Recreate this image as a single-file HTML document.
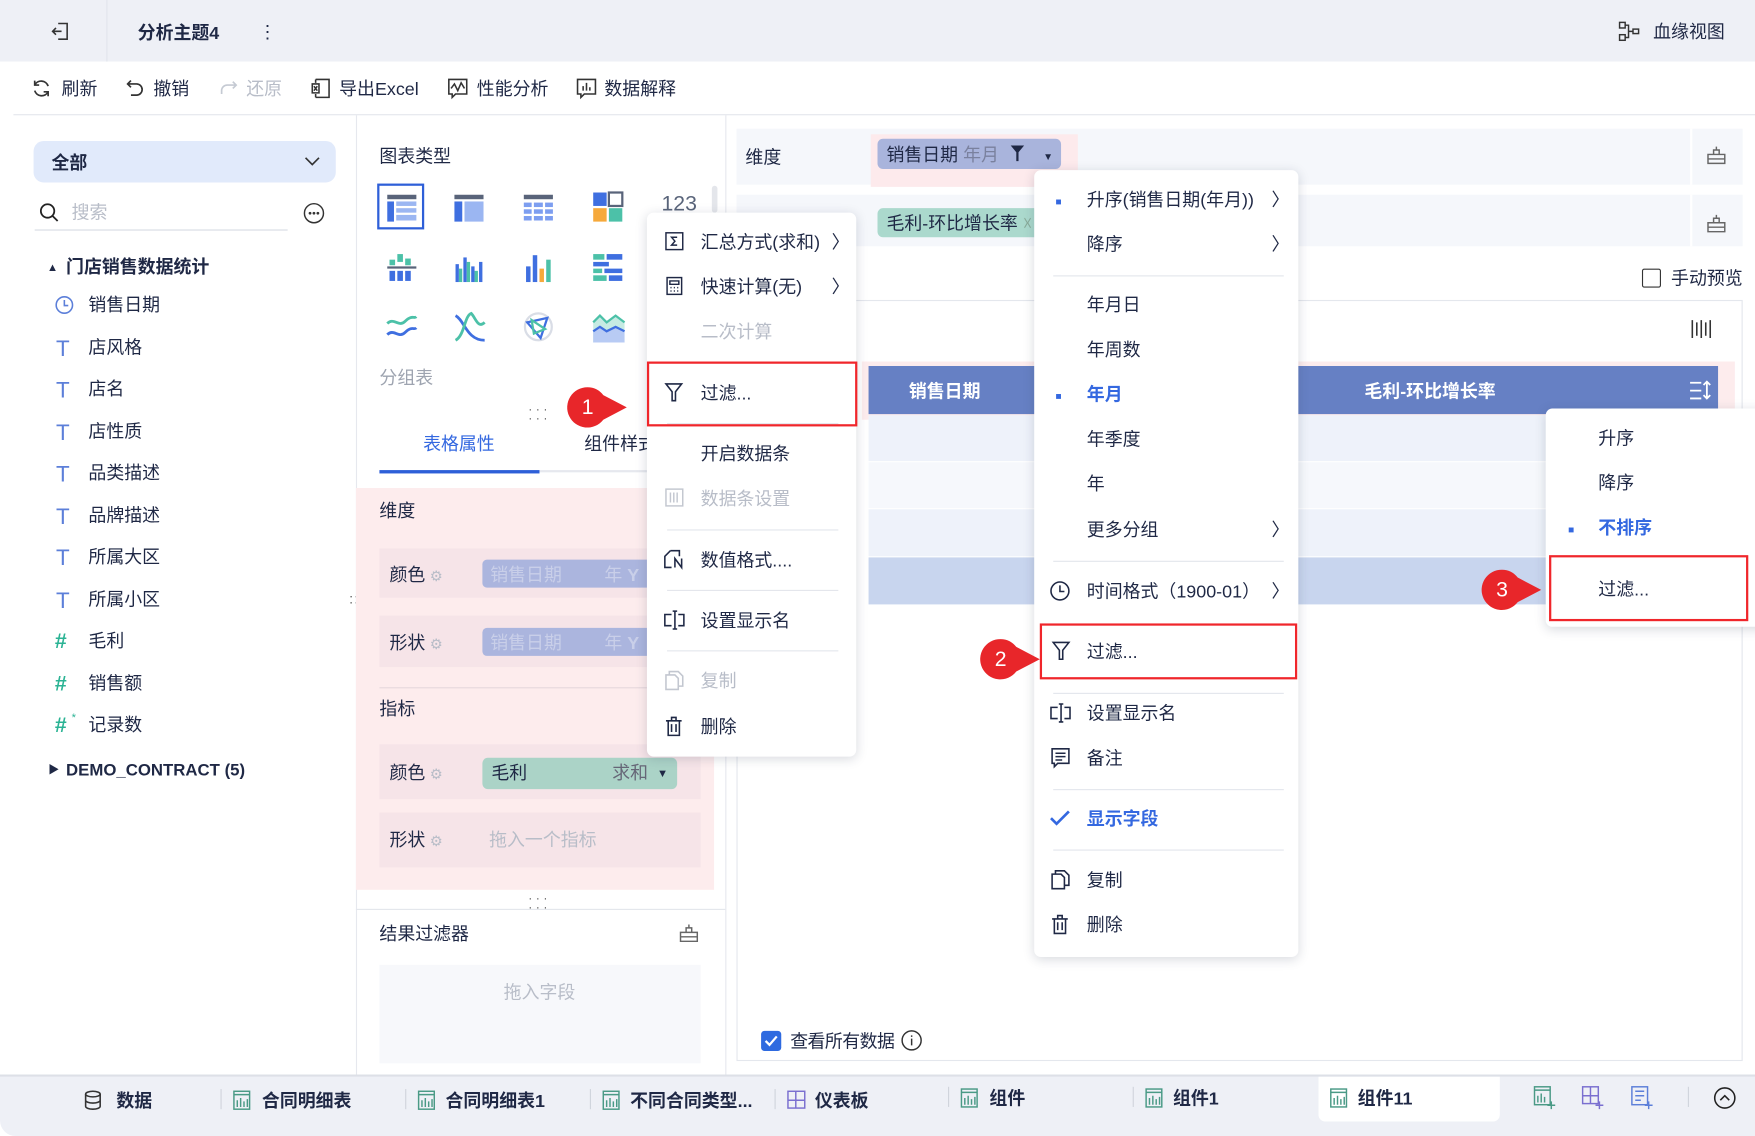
<!DOCTYPE html>
<html><head><meta charset="utf-8">
<style>
*{margin:0;padding:0;box-sizing:border-box}
html,body{width:1755px;height:1136px;overflow:hidden;background:#fff}
#w{position:absolute;left:0;top:0;width:1568px;height:1015px;transform:scale(1.11926);transform-origin:0 0;font-family:"Liberation Sans","Noto Sans CJK SC",sans-serif;color:#1f2845;font-size:16px}
.a{position:absolute}
.t{position:absolute;white-space:nowrap;transform:translateY(calc(-50% + 2px));line-height:20px}
.g{color:#b8bdc8}
.b{font-weight:bold}
.bl{color:#3468e0}
.menu{position:absolute;background:#fff;border-radius:6px;box-shadow:0 2px 10px rgba(40,50,80,.18)}
.sep{position:absolute;height:1px;background:#e3e6ec}
.red{position:absolute;border:2.5px solid #f0262b}
svg{position:absolute;overflow:visible}
</style></head><body><div id="w">
<!-- top bar -->
<div class="a" style="left:0;top:0;width:1568px;height:55px;background:#eef0f6"></div>
<div class="a" style="left:95px;top:0;width:1px;height:55px;background:#e2e5ec"></div>
<svg style="left:45px;top:19px" width="18" height="18" viewBox="0 0 18 18" fill="none" stroke="#333" stroke-width="1.4"><path d="M7 2h8v14H7M10 9H2M5 6L2 9l3 3"/></svg>
<div class="t b" style="left:123px;top:29px">分析主题4</div>
<div class="t" style="left:231px;top:28px">⋮</div>
<svg style="left:1446px;top:19px" width="20" height="18" viewBox="0 0 20 18" fill="none" stroke="#333" stroke-width="1.3"><rect x="1" y="1" width="5" height="5"/><rect x="1" y="12" width="5" height="5"/><rect x="13" y="7" width="5" height="4"/><path d="M6 3.5h3v11H6M9 9h4"/></svg>
<div class="t" style="left:1477px;top:28px">血缘视图</div>
<!-- toolbar -->
<div class="a" style="left:12px;top:102px;width:1556px;height:1px;background:#e3e6ec"></div>
<svg style="left:28px;top:70px" width="18" height="18" viewBox="0 0 18 18" fill="none" stroke="#333" stroke-width="1.5"><path d="M15 7A6.5 6.5 0 0 0 3 6M3 11a6.5 6.5 0 0 0 12 1M3 2v4h4M15 16v-4h-4"/></svg>
<div class="t" style="left:55px;top:79px">刷新</div>
<svg style="left:112px;top:70px" width="18" height="18" viewBox="0 0 18 18" fill="none" stroke="#333" stroke-width="1.5"><path d="M5 2L2 5l3 3M2 5h8a5 5 0 0 1 0 10H5"/></svg>
<div class="t" style="left:137px;top:79px">撤销</div>
<svg style="left:195px;top:70px" width="18" height="18" viewBox="0 0 18 18" fill="none" stroke="#c5cad3" stroke-width="1.5"><path d="M13 3l3 3-3 3M16 6H8a5 5 0 0 0-5 5v3"/></svg>
<div class="t g" style="left:220px;top:79px">还原</div>
<svg style="left:278px;top:70px" width="18" height="18" viewBox="0 0 18 18" fill="none" stroke="#333" stroke-width="1.4"><path d="M4 1h12v16H4M4 1v3M4 14v3M1 5h6v8H1zM2.5 7l3 4M5.5 7l-3 4"/></svg>
<div class="t" style="left:303px;top:79px">导出Excel</div>
<svg style="left:400px;top:70px" width="18" height="18" viewBox="0 0 18 18" fill="none" stroke="#333" stroke-width="1.4"><path d="M1 1h16v13H7l-3 3v-3H1zM3 9l3-4 3 6 3-7 3 5"/></svg>
<div class="t" style="left:426px;top:79px">性能分析</div>
<svg style="left:515px;top:70px" width="18" height="18" viewBox="0 0 18 18" fill="none" stroke="#333" stroke-width="1.4"><path d="M1 1h16v13H7l-3 3v-3H1zM6 11V7M9 11V4M12 11V8"/></svg>
<div class="t" style="left:540px;top:79px">数据解释</div>
<!-- left panel -->
<div class="a" style="left:30px;top:126px;width:270px;height:37px;background:#e1eafb;border-radius:9px"></div>
<div class="t b" style="left:46px;top:145px">全部</div>
<svg style="left:272px;top:140px" width="14" height="8" viewBox="0 0 14 8" fill="none" stroke="#333" stroke-width="1.5"><path d="M1 1l6 6 6-6"/></svg>
<svg style="left:35px;top:181px" width="18" height="18" viewBox="0 0 18 18" fill="none" stroke="#222" stroke-width="1.6"><circle cx="7.5" cy="7.5" r="6"/><path d="M12 12l4.5 4.5"/></svg>
<div class="t g" style="left:64px;top:189px">搜索</div>
<div class="a" style="left:31px;top:205px;width:226px;height:1px;background:#d7dbe3"></div>
<svg style="left:271px;top:181px" width="19" height="19" viewBox="0 0 19 19" fill="none" stroke="#333" stroke-width="1.3"><circle cx="9.5" cy="9.5" r="8.5"/><circle cx="6" cy="9.5" r=".6" fill="#333"/><circle cx="9.5" cy="9.5" r=".6" fill="#333"/><circle cx="13" cy="9.5" r=".6" fill="#333"/></svg>
<div class="t" style="left:42px;top:238px;font-size:10px">▲</div>
<div class="t b" style="left:59px;top:238px">门店销售数据统计</div>
<svg style="left:49px;top:264px" width="17" height="17" viewBox="0 0 17 17" fill="none" stroke="#5c7fd9" stroke-width="1.4"><circle cx="8.5" cy="8.5" r="7.3"/><path d="M8.5 4v5h3.5"/></svg>
<div class="t" style="left:79px;top:272px">销售日期</div>
<div style="color:#5c7fd9;font-size:20px">
<div class="t" style="left:50px;top:310px">T</div><div class="t" style="left:50px;top:347px">T</div><div class="t" style="left:50px;top:385px">T</div><div class="t" style="left:50px;top:422px">T</div><div class="t" style="left:50px;top:460px">T</div><div class="t" style="left:50px;top:497px">T</div><div class="t" style="left:50px;top:535px">T</div></div>
<div style="color:#2bb394;font-size:19px;font-weight:bold">
<div class="t" style="left:49px;top:572px">#</div><div class="t" style="left:49px;top:610px">#</div><div class="t" style="left:49px;top:647px">#</div></div>
<div class="t" style="left:64px;top:640px;font-size:10px;color:#2bb394">*</div>
<div class="t" style="left:79px;top:310px">店风格</div>
<div class="t" style="left:79px;top:347px">店名</div>
<div class="t" style="left:79px;top:385px">店性质</div>
<div class="t" style="left:79px;top:422px">品类描述</div>
<div class="t" style="left:79px;top:460px">品牌描述</div>
<div class="t" style="left:79px;top:497px">所属大区</div>
<div class="t" style="left:79px;top:535px">所属小区</div>
<div class="t" style="left:79px;top:572px">毛利</div>
<div class="t" style="left:79px;top:610px">销售额</div>
<div class="t" style="left:79px;top:647px">记录数</div>
<div class="t" style="left:43px;top:687px;font-size:10px">▶</div>
<div class="t b" style="left:59px;top:687px;font-size:15px">DEMO_CONTRACT (5)</div>
<div class="t" style="left:312px;top:533px;font-size:12px;color:#555;letter-spacing:-1px;line-height:6px">: :</div>
<!-- middle panel -->
<div class="a" style="left:318px;top:103px;width:1px;height:860px;background:#e6e8ee"></div>
<div class="a" style="left:648px;top:103px;width:1px;height:860px;background:#e6e8ee"></div>
<div class="t" style="left:339px;top:139px">图表类型</div>
<div class="a" style="left:337px;top:164px;width:42px;height:41px;border:2.5px solid #2e5fd8"></div>
<svg style="left:346px;top:174px" width="26" height="24" viewBox="0 0 26 24"><rect x="0" y="0" width="26" height="4" fill="#59647a"/><rect x="0" y="6" width="6" height="18" fill="#3f6fe0"/><rect x="8" y="6" width="18" height="4" fill="#9bb6f2"/><rect x="8" y="12" width="18" height="4" fill="#9bb6f2"/><rect x="8" y="18" width="18" height="5" fill="#9bb6f2"/></svg>
<svg style="left:406px;top:174px" width="26" height="24" viewBox="0 0 26 24"><rect width="26" height="4" fill="#59647a"/><rect x="0" y="6" width="7" height="18" fill="#3f6fe0"/><rect x="9" y="6" width="17" height="18" fill="#9bb6f2"/></svg>
<svg style="left:468px;top:174px" width="26" height="24" viewBox="0 0 26 24"><rect width="26" height="4" fill="#59647a"/><g fill="#7d9ef0"><rect y="7" width="7" height="4"/><rect x="9" y="7" width="8" height="4"/><rect x="19" y="7" width="7" height="4"/><rect y="13" width="7" height="4"/><rect x="9" y="13" width="8" height="4"/><rect x="19" y="13" width="7" height="4"/><rect y="19" width="7" height="4"/><rect x="9" y="19" width="8" height="4"/><rect x="19" y="19" width="7" height="4"/></g></svg>
<svg style="left:530px;top:172px" width="26" height="26" viewBox="0 0 26 26"><rect width="12" height="12" fill="#3f6fe0"/><rect x="14" y="0" width="12" height="12" fill="#fff" stroke="#59647a" stroke-width="2"/><rect y="14" width="12" height="12" fill="#f6a93b"/><rect x="14" y="14" width="12" height="12" fill="#4cc1a8"/></svg>
<div class="t" style="left:591px;top:181px;font-size:19px;color:#59647a">123</div>
<div class="a" style="left:636px;top:166px;width:5px;height:24px;background:#e4e6eb;border-radius:3px"></div>
<svg style="left:346px;top:227px" width="26" height="24" viewBox="0 0 26 24"><g fill="#4cc1a8"><rect x="9" y="0" width="5" height="7"/><rect x="2" y="5" width="5" height="5"/><rect x="16" y="4" width="5" height="6"/></g><rect x="0" y="11" width="26" height="2" fill="#59647a"/><g fill="#3f6fe0"><rect x="2" y="15" width="5" height="9"/><rect x="9" y="15" width="5" height="9"/><rect x="16" y="15" width="5" height="9"/></g></svg>
<svg style="left:406px;top:226px" width="26" height="26" viewBox="0 0 26 26"><g fill="#3f6fe0"><rect x="1" y="10" width="3" height="16"/><rect x="8" y="4" width="3" height="22"/><rect x="15" y="12" width="3" height="14"/><rect x="22" y="8" width="3" height="18"/></g><g fill="#4cc1a8"><rect x="4" y="14" width="3" height="12"/><rect x="11" y="8" width="3" height="18"/><rect x="18" y="16" width="3" height="10"/></g></svg>
<svg style="left:468px;top:226px" width="26" height="26" viewBox="0 0 26 26"><rect x="2" y="12" width="4" height="14" fill="#3f6fe0"/><rect x="8" y="2" width="4" height="24" fill="#3f6fe0"/><rect x="14" y="14" width="4" height="12" fill="#f6a93b"/><rect x="20" y="6" width="4" height="20" fill="#4cc1a8"/></svg>
<svg style="left:530px;top:227px" width="26" height="24" viewBox="0 0 26 24"><rect x="0" y="0" width="10" height="5" fill="#4cc1a8"/><rect x="12" y="0" width="14" height="5" fill="#3f6fe0"/><rect x="0" y="7" width="14" height="4" fill="#3f6fe0"/><rect x="0" y="13" width="8" height="4" fill="#4cc1a8"/><rect x="10" y="13" width="16" height="4" fill="#3f6fe0"/><rect x="0" y="19" width="12" height="5" fill="#4cc1a8"/><rect x="14" y="19" width="12" height="5" fill="#3f6fe0"/></svg>
<svg style="left:345px;top:279px" width="28" height="26" viewBox="0 0 28 26" fill="none" stroke-width="2.5"><path d="M1 10c6-6 10 4 16-2s8-2 10-4" stroke="#4cc1a8"/><path d="M1 20c6-6 10 4 16-2s8-2 10-4" stroke="#3f6fe0"/></svg>
<svg style="left:406px;top:278px" width="28" height="28" viewBox="0 0 28 28" fill="none" stroke-width="2.5"><path d="M1 4c8 4 10 22 26 22" stroke="#3f6fe0"/><path d="M1 26c8-4 8-22 14-24 4 4 6 14 12 8" stroke="#4cc1a8"/></svg>
<svg style="left:467px;top:278px" width="28" height="28" viewBox="0 0 28 28" fill="none" stroke-width="2"><circle cx="14" cy="14" r="12" stroke="#d9dde6"/><path d="M4 10l18-4-6 18z" stroke="#3f6fe0"/><path d="M8 8l12 8-10 4z" stroke="#4cc1a8"/></svg>
<svg style="left:530px;top:280px" width="28" height="26" viewBox="0 0 28 26"><path d="M0 8l6-6 6 6 8-6 8 6v18H0z" fill="#c6ebe3"/><path d="M0 8l6-6 6 6 8-6 8 6" stroke="#4cc1a8" stroke-width="2" fill="none"/><path d="M0 16l6-4 6 4 8-4 8 4v10H0z" fill="#b8cbf4"/><path d="M0 16l6-4 6 4 8-4 8 4" stroke="#3f6fe0" stroke-width="2" fill="none"/></svg>
<div class="t g" style="left:339px;top:337px;color:#9ea4b0">分组表</div>
<div class="t" style="left:472px;top:368px;font-size:11px;color:#555;line-height:8px">· · ·<br>· · ·</div>
<div class="a" style="left:339px;top:420px;width:300px;height:2px;background:#e6e8ee"></div>
<div class="a" style="left:339px;top:420px;width:143px;height:3px;background:#2e5fd8"></div>
<div class="t bl" style="left:378px;top:396px">表格属性</div>
<div class="t" style="left:522px;top:396px">组件样式</div>
<div class="a" style="left:318px;top:436px;width:320px;height:359px;background:#fdeced"></div>
<div class="t" style="left:339px;top:456px">维度</div>
<div class="a" style="left:339px;top:490px;width:287px;height:44px;background:#f6e4e8"></div>
<div class="a" style="left:339px;top:550px;width:287px;height:46px;background:#f6e4e8"></div>
<div class="t" style="left:348px;top:513px">颜色</div><div class="t g" style="left:384px;top:513px;font-size:13px">⚙</div>
<div class="t" style="left:348px;top:574px">形状</div><div class="t g" style="left:384px;top:574px;font-size:13px">⚙</div>
<div class="a" style="left:431px;top:500px;width:160px;height:25px;background:#abb5de;border-radius:4px"></div>
<div class="a" style="left:431px;top:561px;width:160px;height:25px;background:#abb5de;border-radius:4px"></div>
<div class="t" style="left:438px;top:513px;color:#c9cfe9">销售日期</div><div class="t" style="left:540px;top:513px;color:#c9cfe9">年 <b>Y</b></div>
<div class="t" style="left:438px;top:574px;color:#c9cfe9">销售日期</div><div class="t" style="left:540px;top:574px;color:#c9cfe9">年 <b>Y</b></div>
<div class="a" style="left:339px;top:614px;width:287px;height:1px;background:#e6d8dc"></div>
<div class="t" style="left:339px;top:633px">指标</div>
<div class="a" style="left:339px;top:665px;width:287px;height:49px;background:#f6e4e8"></div>
<div class="a" style="left:339px;top:726px;width:287px;height:49px;background:#f6e4e8"></div>
<div class="t" style="left:348px;top:690px">颜色</div><div class="t g" style="left:384px;top:690px;font-size:13px">⚙</div>
<div class="a" style="left:431px;top:677px;width:174px;height:28px;background:#abd3c7;border-radius:5px"></div>
<div class="t" style="left:439px;top:690px">毛利</div><div class="t" style="left:547px;top:690px;color:#667">求和</div><div class="t" style="left:587px;top:690px;font-size:10px">▼</div>
<div class="t" style="left:348px;top:750px">形状</div><div class="t g" style="left:384px;top:750px;font-size:13px">⚙</div>
<div class="t g" style="left:437px;top:750px">拖入一个指标</div>
<div class="t" style="left:472px;top:805px;font-size:11px;color:#555;line-height:8px">· · ·<br>· · ·</div>
<div class="a" style="left:318px;top:812px;width:330px;height:1px;background:#e3e6ec"></div>
<div class="t" style="left:339px;top:834px">结果过滤器</div>
<svg style="left:607px;top:825px" width="17" height="17" viewBox="0 0 17 17" fill="none" stroke="#666" stroke-width="1.3"><path d="M1 8h15v8H1zM6 8V4h5v4M8.5 1v3M1 12h15"/></svg>
<div class="a" style="left:339px;top:862px;width:287px;height:88px;background:#f7f8fb"></div>
<div class="t g" style="left:450px;top:886px">拖入字段</div>
<!-- right panel -->
<div class="a" style="left:658px;top:115px;width:899px;height:50px;background:#f5f7fb"></div>
<div class="a" style="left:658px;top:174px;width:899px;height:46px;background:#f5f7fb"></div>
<div class="a" style="left:1510px;top:115px;width:2px;height:50px;background:#fff"></div>
<div class="a" style="left:1510px;top:174px;width:2px;height:46px;background:#fff"></div>
<div class="t" style="left:666px;top:140px">维度</div>
<div class="a" style="left:778px;top:120px;width:185px;height:47px;background:#fdeaec"></div>
<div class="a" style="left:784px;top:124px;width:164px;height:27px;background:#a9b4dc;border-radius:5px"></div>
<div class="t" style="left:792px;top:138px">销售日期 <span style="color:#7a819e">年月</span></div>
<svg style="left:903px;top:130px" width="12" height="14" viewBox="0 0 12 14"><path d="M0 0h12L7 6v8H5V6z" fill="#1f2845"/></svg>
<div class="t" style="left:932px;top:138px;font-size:9px">▼</div>
<div class="a" style="left:784px;top:186px;width:150px;height:26px;background:#abd9cd;border-radius:5px 0 0 5px"></div>
<div class="t" style="left:792px;top:199px">毛利-环比增长率 <span style="color:#8a9">☓</span></div>
<svg style="left:1525px;top:130px" width="17" height="17" viewBox="0 0 17 17" fill="none" stroke="#666" stroke-width="1.3"><path d="M1 8h15v8H1zM6 8V4h5v4M8.5 1v3M1 12h15"/></svg>
<svg style="left:1525px;top:191px" width="17" height="17" viewBox="0 0 17 17" fill="none" stroke="#666" stroke-width="1.3"><path d="M1 8h15v8H1zM6 8V4h5v4M8.5 1v3M1 12h15"/></svg>
<div class="a" style="left:1467px;top:240px;width:17px;height:17px;border:1.3px solid #333;border-radius:2px"></div>
<div class="t" style="left:1493px;top:248px">手动预览</div>
<div class="a" style="left:658px;top:268px;width:899px;height:680px;border:1px solid #e4e7ed"></div>
<svg style="left:1511px;top:285px" width="18" height="18" viewBox="0 0 18 18" fill="none" stroke="#333" stroke-width="1.4"><path d="M1 1v16M5 3v12M9 1v16M13 3v12M17 1v16"/></svg>
<div class="a" style="left:770px;top:323px;width:780px;height:52px;background:#fdeced"></div>
<div class="a" style="left:776px;top:327px;width:759px;height:43px;background:#6680c4"></div>
<div class="t b" style="left:812px;top:349px;color:#fff">销售日期</div>
<div class="t b" style="left:1219px;top:349px;color:#fff">毛利-环比增长率</div>
<svg style="left:1509px;top:340px" width="20" height="18" viewBox="0 0 20 18" fill="none" stroke="#fff" stroke-width="1.6"><path d="M1 2h10M1 9h10M1 16h10M16 1v15M13 13l3 3 3-3M13 4l3-3 3 3"/></svg>
<div class="a" style="left:776px;top:371px;width:759px;height:41px;background:#eef2fa"></div>
<div class="a" style="left:776px;top:413px;width:759px;height:41px;background:#f6f8fc"></div>
<div class="a" style="left:776px;top:455px;width:759px;height:42px;background:#eef2fa"></div>
<div class="a" style="left:776px;top:498px;width:759px;height:42px;background:#c8d5ee"></div>
<div class="a" style="left:680px;top:921px;width:18px;height:18px;background:#2e6ae0;border-radius:3px"></div>
<svg style="left:683px;top:925px" width="12" height="10" viewBox="0 0 12 10" fill="none" stroke="#fff" stroke-width="2"><path d="M1 5l3.5 3.5L11 1"/></svg>
<div class="t" style="left:706px;top:930px;letter-spacing:-0.5px">查看所有数据</div>
<svg style="left:805px;top:920px" width="19" height="19" viewBox="0 0 19 19" fill="none" stroke="#333" stroke-width="1.3"><circle cx="9.5" cy="9.5" r="8.5"/><path d="M9.5 8v6M9.5 5v1.4"/></svg>
<!-- bottom bar -->
<div class="a" style="left:0;top:960px;width:1568px;height:55px;background:#eef0f6;border-top:2px solid #dde0e7;border-radius:0 0 0 14px"></div>
<div class="a" style="left:1178px;top:962px;width:162px;height:40px;background:#fff;border-radius:0 0 6px 6px"></div>
<svg style="left:75px;top:974px" width="16" height="18" viewBox="0 0 16 18" fill="none" stroke="#333" stroke-width="1.4"><ellipse cx="8" cy="3.5" rx="6.5" ry="2.5"/><path d="M1.5 3.5v11c0 1.4 3 2.5 6.5 2.5s6.5-1.1 6.5-2.5v-11M1.5 9c0 1.4 3 2.5 6.5 2.5s6.5-1.1 6.5-2.5"/></svg>
<div class="t b" style="left:104px;top:983px">数据</div>
<div style="font-weight:bold">
<div class="t" style="left:234px;top:983px">合同明细表</div>
<div class="t" style="left:398px;top:983px">合同明细表1</div>
<div class="t" style="left:563px;top:983px">不同合同类型...</div>
<div class="t" style="left:728px;top:983px">仪表板</div>
<div class="t" style="left:884px;top:981px">组件</div>
<div class="t" style="left:1048px;top:981px">组件1</div>
<div class="t" style="left:1213px;top:981px">组件11</div></div>
<div class="a" style="left:197px;top:973px;width:1px;height:18px;background:#d0d4dc"></div>
<div class="a" style="left:362px;top:973px;width:1px;height:18px;background:#d0d4dc"></div>
<div class="a" style="left:527px;top:973px;width:1px;height:18px;background:#d0d4dc"></div>
<div class="a" style="left:692px;top:973px;width:1px;height:18px;background:#d0d4dc"></div>
<div class="a" style="left:847px;top:971px;width:1px;height:18px;background:#d0d4dc"></div>
<div class="a" style="left:1012px;top:971px;width:1px;height:18px;background:#d0d4dc"></div>
<div class="a" style="left:1508px;top:971px;width:1px;height:18px;background:#d0d4dc"></div>
<svg style="left:208px;top:974px" width="16" height="18" viewBox="0 0 16 18" fill="none" stroke="#4a9a86" stroke-width="1.3"><rect x="1" y="1" width="14" height="16"/><path d="M1 4h14M4 15V9M7 15V7M10 15v-5M13 15V8"/></svg>
<svg style="left:373px;top:974px" width="16" height="18" viewBox="0 0 16 18" fill="none" stroke="#4a9a86" stroke-width="1.3"><rect x="1" y="1" width="14" height="16"/><path d="M1 4h14M4 15V9M7 15V7M10 15v-5M13 15V8"/></svg>
<svg style="left:538px;top:974px" width="16" height="18" viewBox="0 0 16 18" fill="none" stroke="#4a9a86" stroke-width="1.3"><rect x="1" y="1" width="14" height="16"/><path d="M1 4h14M4 15V9M7 15V7M10 15v-5M13 15V8"/></svg>
<svg style="left:703px;top:974px" width="17" height="17" viewBox="0 0 17 17" fill="none" stroke="#7a6fd0" stroke-width="1.3"><rect x="1" y="1" width="15" height="15"/><path d="M8 1v15M1 9h15"/></svg>
<svg style="left:858px;top:972px" width="16" height="18" viewBox="0 0 16 18" fill="none" stroke="#4a9a86" stroke-width="1.3"><rect x="1" y="1" width="14" height="16"/><path d="M1 4h14M4 15V9M7 15V7M10 15v-5M13 15V8"/></svg>
<svg style="left:1023px;top:972px" width="16" height="18" viewBox="0 0 16 18" fill="none" stroke="#4a9a86" stroke-width="1.3"><rect x="1" y="1" width="14" height="16"/><path d="M1 4h14M4 15V9M7 15V7M10 15v-5M13 15V8"/></svg>
<svg style="left:1188px;top:972px" width="16" height="18" viewBox="0 0 16 18" fill="none" stroke="#4a9a86" stroke-width="1.3"><rect x="1" y="1" width="14" height="16"/><path d="M1 4h14M4 15V9M7 15V7M10 15v-5M13 15V8"/></svg>
<svg style="left:1370px;top:970px" width="20" height="22" viewBox="0 0 20 22" fill="none" stroke="#4a9a86" stroke-width="1.3"><rect x="1" y="1" width="14" height="16"/><path d="M1 4h14M4 15V9M7 15V7M10 15v-5M16 14v7M12.5 17.5h7"/></svg>
<svg style="left:1413px;top:970px" width="20" height="22" viewBox="0 0 20 22" fill="none" stroke="#7a6fd0" stroke-width="1.3"><rect x="1" y="1" width="14" height="15"/><path d="M8 1v15M1 9h14M16 14v7M12.5 17.5h7"/></svg>
<svg style="left:1457px;top:970px" width="20" height="22" viewBox="0 0 20 22" fill="none" stroke="#5c7fd9" stroke-width="1.3"><rect x="1" y="1" width="14" height="16"/><path d="M4 5h8M4 9h8M4 13h5M16 14v7M12.5 17.5h7"/></svg>
<svg style="left:1531px;top:971px" width="20" height="20" viewBox="0 0 20 20" fill="none" stroke="#222" stroke-width="1.4"><circle cx="10" cy="10" r="9"/><path d="M6 12l4-4 4 4"/></svg>
<!-- menu 1 -->
<div class="menu" style="left:578px;top:190px;width:187px;height:486px"></div>
<svg style="left:594px;top:207px" width="17" height="17" viewBox="0 0 17 17" fill="none" stroke="#1f2845" stroke-width="1.3"><rect x="1" y="1" width="15" height="15"/><path d="M11 5H6l3 3.5L6 12h5"/></svg>
<div class="t" style="left:626px;top:216px">汇总方式(求和)</div><div class="t" style="left:743px;top:216px">〉</div>
<svg style="left:595px;top:247px" width="15" height="17" viewBox="0 0 15 17" fill="none" stroke="#1f2845" stroke-width="1.3"><rect x="1" y="1" width="13" height="15"/><path d="M3.5 4h8v3h-8zM4 10h1M7 10h1M10 10h1M4 13h1M7 13h1M10 13h1"/></svg>
<div class="t" style="left:626px;top:256px">快速计算(无)</div><div class="t" style="left:743px;top:256px">〉</div>
<div class="t g" style="left:626px;top:296px">二次计算</div>
<div class="sep" style="left:596px;top:378px;width:153px"></div>
<svg style="left:594px;top:342px" width="16" height="17" viewBox="0 0 16 17" fill="none" stroke="#1f2845" stroke-width="1.4"><path d="M1 1h14L9.5 8v8h-3V8z"/></svg>
<div class="t" style="left:626px;top:351px">过滤...</div>
<div class="red" style="left:578px;top:323px;width:188px;height:58px"></div>
<div class="t" style="left:626px;top:405px">开启数据条</div>
<svg style="left:594px;top:436px" width="17" height="17" viewBox="0 0 17 17" fill="none" stroke="#c3c7d0" stroke-width="1.3"><rect x="1" y="1" width="15" height="15"/><path d="M5 4v9M8 4v9M11 4v9"/></svg>
<div class="t g" style="left:626px;top:445px">数据条设置</div>
<div class="sep" style="left:596px;top:473px;width:153px"></div>
<svg style="left:593px;top:491px" width="19" height="17" viewBox="0 0 19 17" fill="none" stroke="#1f2845" stroke-width="1.4"><path d="M6 1L1 6v10h6M6 1h8v5M10 16V8l6 8V8"/></svg>
<div class="t" style="left:626px;top:500px">数值格式....</div>
<div class="sep" style="left:596px;top:527px;width:153px"></div>
<svg style="left:593px;top:545px" width="19" height="18" viewBox="0 0 19 18" fill="none" stroke="#1f2845" stroke-width="1.4"><path d="M7 4H1v10h6M13 4h5v10h-5M10 1v16M8 1h4M8 17h4"/></svg>
<div class="t" style="left:626px;top:554px">设置显示名</div>
<div class="sep" style="left:596px;top:581px;width:153px"></div>
<svg style="left:594px;top:599px" width="17" height="18" viewBox="0 0 17 18" fill="none" stroke="#c3c7d0" stroke-width="1.4"><path d="M4 4V1h8l4 4v9h-4M1 4h8l3 3v10H1z"/></svg>
<div class="t g" style="left:626px;top:608px">复制</div>
<svg style="left:594px;top:640px" width="16" height="18" viewBox="0 0 16 18" fill="none" stroke="#1f2845" stroke-width="1.4"><path d="M1 4h14M6 4V1h4v3M3 4v13h10V4M6 7v7M10 7v7"/></svg>
<div class="t" style="left:626px;top:649px">删除</div>
<!-- menu 2 -->
<div class="menu" style="left:924px;top:152px;width:236px;height:703px"></div>
<div class="t bl" style="left:943px;top:178px;font-size:9px">■</div>
<div class="t" style="left:971px;top:178px">升序(销售日期(年月))</div><div class="t" style="left:1136px;top:178px">〉</div>
<div class="t" style="left:971px;top:218px">降序</div><div class="t" style="left:1136px;top:218px">〉</div>
<div class="sep" style="left:941px;top:246px;width:206px"></div>
<div class="t" style="left:971px;top:272px">年月日</div>
<div class="t" style="left:971px;top:312px">年周数</div>
<div class="t bl" style="left:943px;top:352px;font-size:9px">■</div>
<div class="t bl b" style="left:971px;top:352px">年月</div>
<div class="t" style="left:971px;top:392px">年季度</div>
<div class="t" style="left:971px;top:432px">年</div>
<div class="t" style="left:971px;top:473px">更多分组</div><div class="t" style="left:1136px;top:473px">〉</div>
<div class="sep" style="left:941px;top:501px;width:206px"></div>
<svg style="left:938px;top:519px" width="18" height="18" viewBox="0 0 18 18" fill="none" stroke="#1f2845" stroke-width="1.4"><circle cx="9" cy="9" r="8"/><path d="M9 4v5.5h4"/></svg>
<div class="t" style="left:971px;top:528px">时间格式（1900-01）</div><div class="t" style="left:1136px;top:528px">〉</div>
<svg style="left:940px;top:573px" width="16" height="17" viewBox="0 0 16 17" fill="none" stroke="#1f2845" stroke-width="1.4"><path d="M1 1h14L9.5 8v8h-3V8z"/></svg>
<div class="t" style="left:971px;top:582px">过滤...</div>
<div class="red" style="left:929px;top:557px;width:230px;height:50px"></div>
<div class="sep" style="left:941px;top:619px;width:206px"></div>
<svg style="left:938px;top:628px" width="19" height="18" viewBox="0 0 19 18" fill="none" stroke="#1f2845" stroke-width="1.4"><path d="M7 4H1v10h6M13 4h5v10h-5M10 1v16M8 1h4M8 17h4"/></svg>
<div class="t" style="left:971px;top:637px">设置显示名</div>
<svg style="left:939px;top:668px" width="17" height="19" viewBox="0 0 17 19" fill="none" stroke="#1f2845" stroke-width="1.4"><path d="M1 1h15v13H6l-3 3v-3H1zM4 5h9M4 8h9M4 11h6"/></svg>
<div class="t" style="left:971px;top:677px">备注</div>
<div class="sep" style="left:941px;top:705px;width:206px"></div>
<svg style="left:938px;top:724px" width="18" height="14" viewBox="0 0 18 14" fill="none" stroke="#3468e0" stroke-width="2.4"><path d="M1 7l5 5L17 1"/></svg>
<div class="t bl b" style="left:971px;top:731px">显示字段</div>
<div class="sep" style="left:941px;top:759px;width:206px"></div>
<svg style="left:939px;top:777px" width="17" height="18" viewBox="0 0 17 18" fill="none" stroke="#1f2845" stroke-width="1.4"><path d="M4 4V1h8l4 4v9h-4M1 4h8l3 3v10H1z"/></svg>
<div class="t" style="left:971px;top:786px">复制</div>
<svg style="left:939px;top:817px" width="16" height="18" viewBox="0 0 16 18" fill="none" stroke="#1f2845" stroke-width="1.4"><path d="M1 4h14M6 4V1h4v3M3 4v13h10V4M6 7v7M10 7v7"/></svg>
<div class="t" style="left:971px;top:826px">删除</div>
<!-- menu 3 -->
<div class="menu" style="left:1381px;top:365px;width:200px;height:195px"></div>
<div class="t" style="left:1428px;top:391px">升序</div>
<div class="t" style="left:1428px;top:431px">降序</div>
<div class="t bl" style="left:1401px;top:471px;font-size:9px">■</div>
<div class="t bl b" style="left:1428px;top:471px">不排序</div>
<div class="t" style="left:1428px;top:526px">过滤...</div>
<div class="red" style="left:1384px;top:496px;width:178px;height:59px"></div>
<!-- badges -->
<svg style="left:505px;top:345px" width="60" height="38" viewBox="0 0 60 38"><path d="M20 1a18 18 0 1 0 14 29L55 19 34 8A18 18 0 0 0 20 1z" fill="#e8262a"/><text x="20" y="25" font-size="19" fill="#fff" text-anchor="middle" font-family="Liberation Sans">1</text></svg>
<svg style="left:874px;top:570px" width="60" height="38" viewBox="0 0 60 38"><path d="M20 1a18 18 0 1 0 14 29L55 19 34 8A18 18 0 0 0 20 1z" fill="#e8262a"/><text x="20" y="25" font-size="19" fill="#fff" text-anchor="middle" font-family="Liberation Sans">2</text></svg>
<svg style="left:1322px;top:508px" width="60" height="38" viewBox="0 0 60 38"><path d="M20 1a18 18 0 1 0 14 29L55 19 34 8A18 18 0 0 0 20 1z" fill="#e8262a"/><text x="20" y="25" font-size="19" fill="#fff" text-anchor="middle" font-family="Liberation Sans">3</text></svg>
</div></body></html>
